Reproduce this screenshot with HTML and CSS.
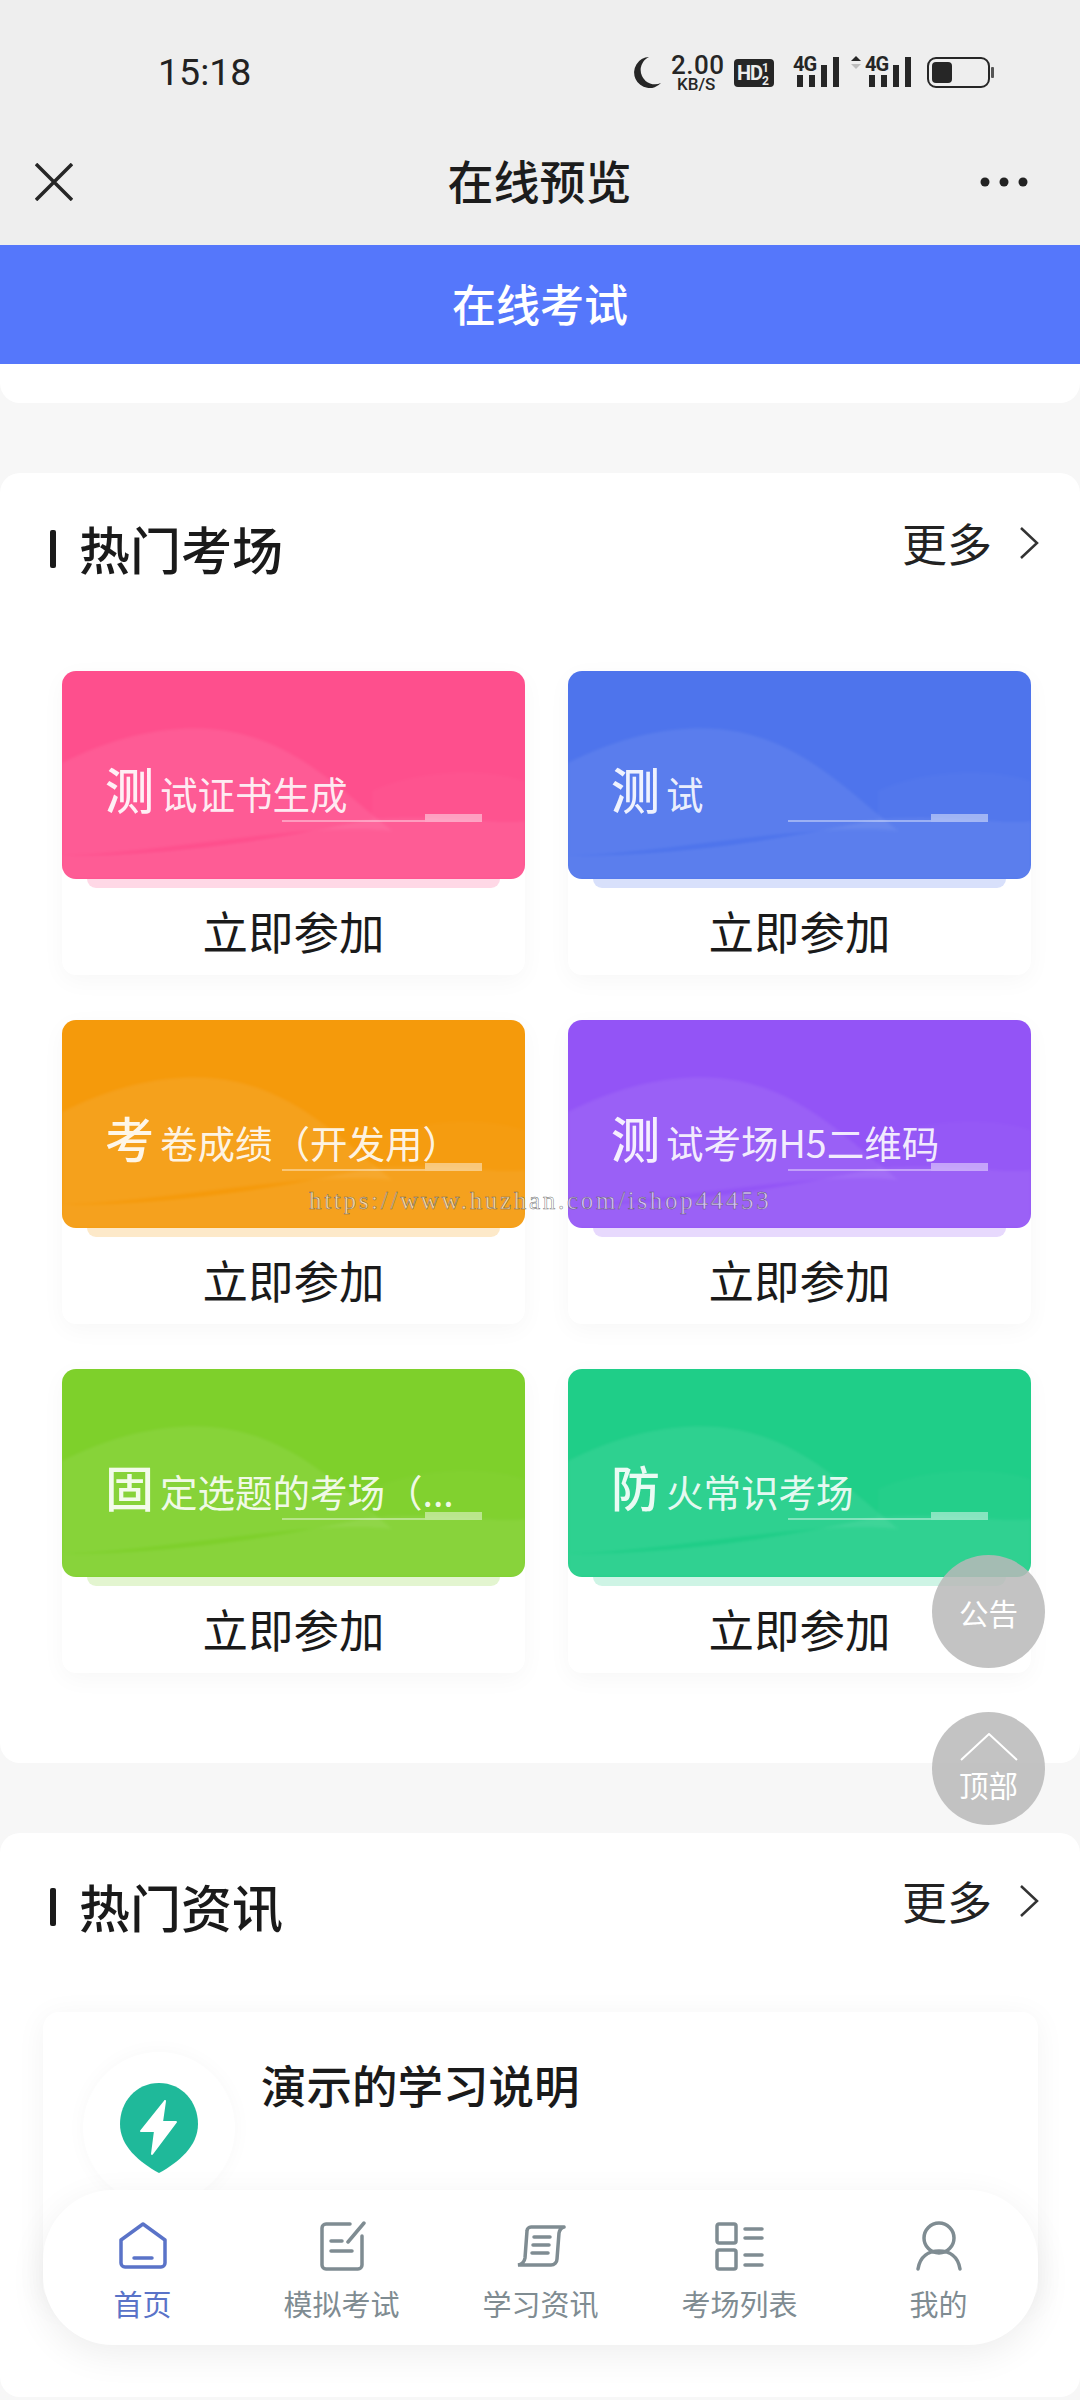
FILE: index.html
```html
<!DOCTYPE html>
<html lang="zh-CN">
<head>
<meta charset="UTF-8" />
<meta name="viewport" content="width=device-width, initial-scale=1" />
<title>在线考试</title>
<link rel="stylesheet" href="styles.css">
</head>
<body>

<div class="page">

  <div class="status-bar">
    <span class="status-time">15:18</span>
    <svg class="status-icons" width="375" height="50" viewBox="625 50 375 50">
      <path d="M649 57 a15.500 15.500 0 1 0 12 26 a14 14 0 0 1 -12 -26z" fill="#262626"/>
      <text x="671" y="74" class="st-speed">2.00</text>
      <text x="677" y="90" class="st-unit">KB/S</text>
      <rect x="734" y="59" width="40" height="28" rx="4" fill="#262626"/>
      <text x="737" y="80" class="st-hd">HD</text>
      <text x="762" y="72" class="st-hd-small">1</text>
      <text x="762" y="85" class="st-hd-small">2</text>
      <text x="793" y="71" class="st-4g">4G</text>
      <rect x="797" y="75" width="6" height="12" fill="#262626"/>
      <rect x="809" y="75" width="6" height="12" fill="#262626"/>
      <rect x="821" y="65" width="6" height="22" fill="#262626"/>
      <rect x="833" y="57" width="6" height="30" fill="#262626"/>
      <path d="M851 61 l5 -5 l5 5z" fill="#262626"/>
      <path d="M851 64 l5 5 l5 -5z" fill="#bdbdbd"/>
      <text x="865" y="71" class="st-4g">4G</text>
      <rect x="869" y="75" width="6" height="12" fill="#262626"/>
      <rect x="881" y="75" width="6" height="12" fill="#262626"/>
      <rect x="893" y="65" width="6" height="22" fill="#262626"/>
      <rect x="905" y="57" width="6" height="30" fill="#262626"/>
      <rect x="928" y="58" width="61" height="29" rx="8" fill="none" stroke="#262626" stroke-width="2"/>
      <rect x="932" y="62" width="20" height="21" rx="4" fill="#262626"/>
      <rect x="991" y="67" width="3" height="11" rx="1" fill="#555"/>
    </svg>
  </div>

  <div class="nav-bar">
    <svg class="nav-close" width="38" height="38" viewBox="0 0 38 38">
      <path d="M1 1 L37 37 M37 1 L1 37" stroke="#262626" stroke-width="3.500" fill="none"/>
    </svg>
    <span class="nav-title">在线预览</span>
    <svg class="nav-more" width="48" height="10" viewBox="0 0 48 10">
      <circle cx="5" cy="5" r="4.500" fill="#222"/>
      <circle cx="24" cy="5" r="4.500" fill="#222"/>
      <circle cx="43" cy="5" r="4.500" fill="#222"/>
    </svg>
  </div>

  <div class="app-header">在线考试</div>

  <div class="stub-section"></div>

  <section class="section exams">
    <div class="section-head">
      <h2 class="section-title">热门考场</h2>
      <a class="more-link">更多
        <svg width="22" height="34" viewBox="0 0 22 34"><path d="M3 2 L19 17 L3 32" fill="none" stroke="#333" stroke-width="2.500"/></svg>
      </a>
    </div>

    <div class="exam-grid">
      <div class="exam-card pink">
        <div class="exam-banner">
          <svg class="waves" viewBox="0 0 463 208" preserveAspectRatio="none"><path class="wave-a" d="M0 92 C60 62 110 55 150 58 C230 65 280 120 330 160 C250 150 120 180 0 185Z"/><path class="wave-b" d="M0 185 C120 185 230 165 300 150 C370 140 430 155 463 150 V208 H0Z"/><path class="wave-c" d="M310 120 C350 100 420 95 463 110 V150 C420 155 370 140 310 150Z"/></svg>
          <div class="banner-title"><b>测</b><span>试证书生成</span></div>
          <i class="banner-line"></i><i class="banner-tick"></i>
        </div>
        <div class="banner-lip"></div>
        <div class="exam-join">立即参加</div>
      </div>

      <div class="exam-card blue">
        <div class="exam-banner">
          <svg class="waves" viewBox="0 0 463 208" preserveAspectRatio="none"><path class="wave-a" d="M0 92 C60 62 110 55 150 58 C230 65 280 120 330 160 C250 150 120 180 0 185Z"/><path class="wave-b" d="M0 185 C120 185 230 165 300 150 C370 140 430 155 463 150 V208 H0Z"/><path class="wave-c" d="M310 120 C350 100 420 95 463 110 V150 C420 155 370 140 310 150Z"/></svg>
          <div class="banner-title"><b>测</b><span>试</span></div>
          <i class="banner-line"></i><i class="banner-tick"></i>
        </div>
        <div class="banner-lip"></div>
        <div class="exam-join">立即参加</div>
      </div>

      <div class="exam-card orange">
        <div class="exam-banner">
          <svg class="waves" viewBox="0 0 463 208" preserveAspectRatio="none"><path class="wave-a" d="M0 92 C60 62 110 55 150 58 C230 65 280 120 330 160 C250 150 120 180 0 185Z"/><path class="wave-b" d="M0 185 C120 185 230 165 300 150 C370 140 430 155 463 150 V208 H0Z"/><path class="wave-c" d="M310 120 C350 100 420 95 463 110 V150 C420 155 370 140 310 150Z"/></svg>
          <div class="banner-title"><b>考</b><span>卷成绩（开发用）</span></div>
          <i class="banner-line"></i><i class="banner-tick"></i>
        </div>
        <div class="banner-lip"></div>
        <div class="exam-join">立即参加</div>
      </div>

      <div class="exam-card purple">
        <div class="exam-banner">
          <svg class="waves" viewBox="0 0 463 208" preserveAspectRatio="none"><path class="wave-a" d="M0 92 C60 62 110 55 150 58 C230 65 280 120 330 160 C250 150 120 180 0 185Z"/><path class="wave-b" d="M0 185 C120 185 230 165 300 150 C370 140 430 155 463 150 V208 H0Z"/><path class="wave-c" d="M310 120 C350 100 420 95 463 110 V150 C420 155 370 140 310 150Z"/></svg>
          <div class="banner-title"><b>测</b><span>试考场H5二维码</span></div>
          <i class="banner-line"></i><i class="banner-tick"></i>
        </div>
        <div class="banner-lip"></div>
        <div class="exam-join">立即参加</div>
      </div>

      <div class="exam-card lime">
        <div class="exam-banner">
          <svg class="waves" viewBox="0 0 463 208" preserveAspectRatio="none"><path class="wave-a" d="M0 92 C60 62 110 55 150 58 C230 65 280 120 330 160 C250 150 120 180 0 185Z"/><path class="wave-b" d="M0 185 C120 185 230 165 300 150 C370 140 430 155 463 150 V208 H0Z"/><path class="wave-c" d="M310 120 C350 100 420 95 463 110 V150 C420 155 370 140 310 150Z"/></svg>
          <div class="banner-title"><b>固</b><span>定选题的考场（...</span></div>
          <i class="banner-line"></i><i class="banner-tick"></i>
        </div>
        <div class="banner-lip"></div>
        <div class="exam-join">立即参加</div>
      </div>

      <div class="exam-card teal">
        <div class="exam-banner">
          <svg class="waves" viewBox="0 0 463 208" preserveAspectRatio="none"><path class="wave-a" d="M0 92 C60 62 110 55 150 58 C230 65 280 120 330 160 C250 150 120 180 0 185Z"/><path class="wave-b" d="M0 185 C120 185 230 165 300 150 C370 140 430 155 463 150 V208 H0Z"/><path class="wave-c" d="M310 120 C350 100 420 95 463 110 V150 C420 155 370 140 310 150Z"/></svg>
          <div class="banner-title"><b>防</b><span>火常识考场</span></div>
          <i class="banner-line"></i><i class="banner-tick"></i>
        </div>
        <div class="banner-lip"></div>
        <div class="exam-join">立即参加</div>
      </div>
    </div>
  </section>

  <section class="section news">
    <div class="section-head">
      <h2 class="section-title">热门资讯</h2>
      <a class="more-link">更多
        <svg width="22" height="34" viewBox="0 0 22 34"><path d="M3 2 L19 17 L3 32" fill="none" stroke="#333" stroke-width="2.500"/></svg>
      </a>
    </div>

    <div class="news-card">
      <div class="news-logo">
        <svg width="80" height="92" viewBox="0 0 80 92">
          <path d="M40 1 C63 1 79 20 79 42 C79 64 60 80 40 91 C20 80 1 64 1 42 C1 20 17 1 40 1Z" fill="#1fb99a"/>
          <path d="M46 19 L22 49 L36 49 L33 72 L57 40 L43 40Z" fill="#fff" stroke="#fff" stroke-width="2" stroke-linejoin="round"/>
        </svg>
      </div>
      <div class="news-title">演示的学习说明</div>
    </div>
  </section>

  <div class="watermark">https://www.huzhan.com/ishop44453</div>

  <div class="float-btn notice">公告</div>
  <div class="float-btn to-top">
    <svg width="58" height="28" viewBox="0 0 58 28"><path d="M1 27 L29 1 L57 27" fill="none" stroke="#fff" stroke-width="2"/></svg>
    顶部
  </div>

  <nav class="tab-bar">
    <div class="tab-item active">
      <svg width="50" height="48" viewBox="0 0 50 48" fill="none" stroke="#5a73c8" stroke-width="3.500">
        <path d="M25 2 L47 18 V41 a4 4 0 0 1 -4 4 H7 a4 4 0 0 1 -4 -4 V18Z" stroke-linejoin="round"/>
        <path d="M16 36 H34" stroke-linecap="round"/>
      </svg>
      <span>首页</span>
    </div>
    <div class="tab-item">
      <svg width="50" height="50" viewBox="0 0 50 50" fill="none" stroke="#7f8c92" stroke-width="3.500" stroke-linecap="round">
        <path d="M33 3 H9 a4 4 0 0 0 -4 4 V44 a4 4 0 0 0 4 4 H41 a4 4 0 0 0 4 -4 V15"/>
        <path d="M47 2 L31 21 M14 20 H25 M14 30 H35"/>
      </svg>
      <span>模拟考试</span>
    </div>
    <div class="tab-item">
      <svg width="50" height="48" viewBox="0 0 50 48" fill="none" stroke="#7f8c92" stroke-width="3.500" stroke-linecap="round">
        <path d="M48 5 H15 a4 4 0 0 0 -4 4 L9 36 q-1 6 -7 7 H35 a6 6 0 0 0 6 -6 L43 11 q1 -5 5 -6"/>
        <path d="M18 15 H34 M17 23 H33 M16 31 H32"/>
      </svg>
      <span>学习资讯</span>
    </div>
    <div class="tab-item">
      <svg width="50" height="48" viewBox="0 0 50 48" fill="none" stroke="#7f8c92" stroke-width="3.500" stroke-linecap="round">
        <rect x="2" y="2" width="19" height="19" rx="2"/>
        <rect x="2" y="28" width="19" height="19" rx="2"/>
        <path d="M30 7 H47 M30 16 H47 M30 33 H47 M30 43 H47"/>
      </svg>
      <span>考场列表</span>
    </div>
    <div class="tab-item">
      <svg width="50" height="50" viewBox="0 0 50 50" fill="none" stroke="#7f8c92" stroke-width="3.500" stroke-linecap="round">
        <circle cx="25" cy="17" r="15"/>
        <path d="M4 48 C6 35 15 30 25 30 C35 30 44 35 46 48"/>
      </svg>
      <span>我的</span>
    </div>
  </nav>

</div>

</body>
</html>
```

FILE: styles.css
```css
html, body {
  margin: 0;
  padding: 0;
  background: #f7f7f7;
  font-family: "Noto Sans CJK SC", "Noto Sans", sans-serif;
}

.page {
  position: relative;
  width: 1080px;
  height: 2400px;
  overflow: hidden;
  background: #f7f7f7;
  color: #1a1a1a;
}

/* status bar */
.status-bar {
  height: 130px;
  box-sizing: border-box;
  padding: 45px 0 0 158px;
  background: #eeeeee;
  display: flex;
  align-items: flex-start;
  justify-content: space-between;
}
.status-time {
  font-family: Roboto, sans-serif;
  font-size: 37.5px;
  line-height: 54px;
  color: #222;
}
.status-icons {
  margin: 5px 80px 0 0;
}
.status-icons text {
  font-family: Roboto, sans-serif;
  fill: #262626;
  font-weight: 500;
}
.status-icons .st-speed { font-size: 26px; letter-spacing: 0.5px; }
.status-icons .st-unit { font-size: 17px; font-weight: 500; }
.status-icons .st-hd { font-size: 20px; font-weight: 700; fill: #eee; letter-spacing: -1px; }
.status-icons .st-hd-small { font-size: 12px; font-weight: 700; fill: #eee; }
.status-icons .st-4g { font-size: 20px; font-weight: 700; letter-spacing: -1px; }

/* nav bar */
.nav-bar {
  height: 115px;
  box-sizing: border-box;
  padding: 0 52px 12px 35px;
  background: #eeeeee;
  display: flex;
  align-items: center;
  justify-content: space-between;
}
.nav-title {
  font-size: 46px;
  font-weight: 500;
  line-height: 60px;
  color: #1c1c1c;
  margin: 0 0 6px 26px;
}

.app-header {
  height: 119px;
  background: #5577fb;
  color: #fff;
  font-size: 44px;
  font-weight: 500;
  line-height: 116px;
  text-align: center;
}

.stub-section {
  height: 39px;
  background: #fff;
  border-radius: 0 0 20px 20px;
}

/* sections */
.section {
  background: #fff;
  border-radius: 20px;
  margin-top: 70px;
}
.section-head {
  display: flex;
  justify-content: space-between;
  align-items: flex-start;
  height: 198px;
  box-sizing: border-box;
  padding: 38px 40px 0 50px;
}
.section-title {
  margin: -2px 0 0;
  display: flex;
  align-items: center;
  font-size: 51px;
  font-weight: 500;
  line-height: 78px;
  color: #1a1a1a;
}
.section-title::before {
  content: "";
  width: 6px;
  height: 38px;
  background: #1a1a1a;
  border-radius: 2px;
  margin: 2px 23px 0 0;
}
.more-link {
  display: flex;
  align-items: center;
  gap: 26px;
  font-size: 45px;
  line-height: 64px;
  color: #222;
}

.exam-grid {
  display: grid;
  grid-template-columns: 463px 463px;
  column-gap: 43px;
  row-gap: 45px;
  padding: 0 49px 90px 62px;
}
.exam-card {
  height: 304px;
  background: #fff;
  border-radius: 14px;
  box-shadow: 0 6px 24px rgba(0, 0, 0, 0.035);
}
.exam-banner {
  position: relative;
  height: 208px;
  box-sizing: border-box;
  padding: 84px 0 0 43px;
  background: var(--tone);
  border-radius: 14px;
  overflow: hidden;
}
.waves {
  position: absolute;
  left: 0;
  top: 0;
  width: 100%;
  height: 100%;
  fill: #fff;
  filter: blur(1.5px);
}
.wave-a { opacity: 0.07; }
.wave-b { opacity: 0.08; }
.wave-c { opacity: 0.025; }

.banner-title {
  position: relative;
  display: flex;
  align-items: baseline;
  gap: 6px;
  color: rgba(255, 255, 255, 0.9);
  white-space: nowrap;
}
.banner-title b {
  font-size: 49px;
  font-weight: 500;
  line-height: 66px;
}
.banner-title span {
  font-size: 37.5px;
  line-height: 66px;
}
.banner-line {
  position: absolute;
  left: 220px;
  right: 100px;
  top: 149px;
  height: 2px;
  background: rgba(255, 255, 255, 0.4);
}
.banner-tick {
  position: absolute;
  right: 43px;
  top: 143px;
  width: 57px;
  height: 8px;
  background: rgba(255, 255, 255, 0.45);
}
.banner-lip {
  height: 9px;
  margin: 0 25px;
  background: var(--tone);
  opacity: 0.22;
  border-radius: 0 0 12px 12px;
}
.exam-join {
  height: 87px;
  text-align: center;
  font-size: 45.5px;
  line-height: 84px;
  color: #1a1a1a;
}

.pink { --tone: #fe4f8d; }
.blue { --tone: #4e74ec; }
.orange { --tone: #f59a0b; }
.purple { --tone: #9354f6; }
.lime { --tone: #7ed02b; }
.teal { --tone: #1fce88; }

/* news */
.news {
  height: 564px;
}
.news .section-head {
  height: 179px;
  padding-top: 36px;
}
.news-card {
  margin: 0 42px 0 43px;
  height: 290px;
  box-sizing: border-box;
  padding: 40px 0 0 40px;
  background: #fff;
  border-radius: 16px;
  box-shadow: 0 4px 30px rgba(0, 0, 0, 0.05);
  display: flex;
  align-items: flex-start;
  gap: 26px;
}
.news-logo {
  width: 152px;
  height: 152px;
  background: #fff;
  border-radius: 50%;
  box-shadow: 0 0 20px rgba(0, 0, 0, 0.03);
  display: flex;
  align-items: center;
  justify-content: center;
  flex-shrink: 0;
}
.news-title {
  font-size: 45.5px;
  font-weight: 500;
  line-height: 64px;
  color: #1a1a1a;
}

/* things lying over the page */
.watermark {
  position: absolute;
  left: 309px;
  top: 1186px;
  font-family: "Liberation Serif", serif;
  font-size: 25px;
  letter-spacing: 2.7px;
  line-height: 30px;
  white-space: nowrap;
  color: rgba(255, 255, 255, 0.6);
  -webkit-text-stroke: 0.5px rgba(80, 80, 80, 0.85);
}

.float-btn {
  position: absolute;
  left: 932px;
  width: 113px;
  height: 113px;
  border-radius: 50%;
  background: rgba(185, 185, 185, 0.85);
  color: #fff;
  font-size: 29.5px;
  display: flex;
  flex-direction: column;
  align-items: center;
  justify-content: center;
}
.notice { top: 1555px; }
.to-top {
  top: 1712px;
  line-height: 36px;
  gap: 5px;
  box-sizing: border-box;
  padding-bottom: 2px;
}

.tab-bar {
  position: absolute;
  left: 43px;
  top: 2190px;
  width: 995px;
  height: 155px;
  background: #fff;
  border-radius: 70px;
  box-shadow: 0 10px 36px rgba(0, 0, 0, 0.07);
  display: flex;
}
.tab-item {
  flex: 1;
  display: flex;
  flex-direction: column;
  align-items: center;
  padding-top: 31px;
  color: #7f8c92;
  font-size: 29px;
  line-height: 40px;
}
.tab-item svg {
  height: 50px;
  margin-bottom: 12px;
}
.tab-item.active {
  color: #5a73c8;
}
```
